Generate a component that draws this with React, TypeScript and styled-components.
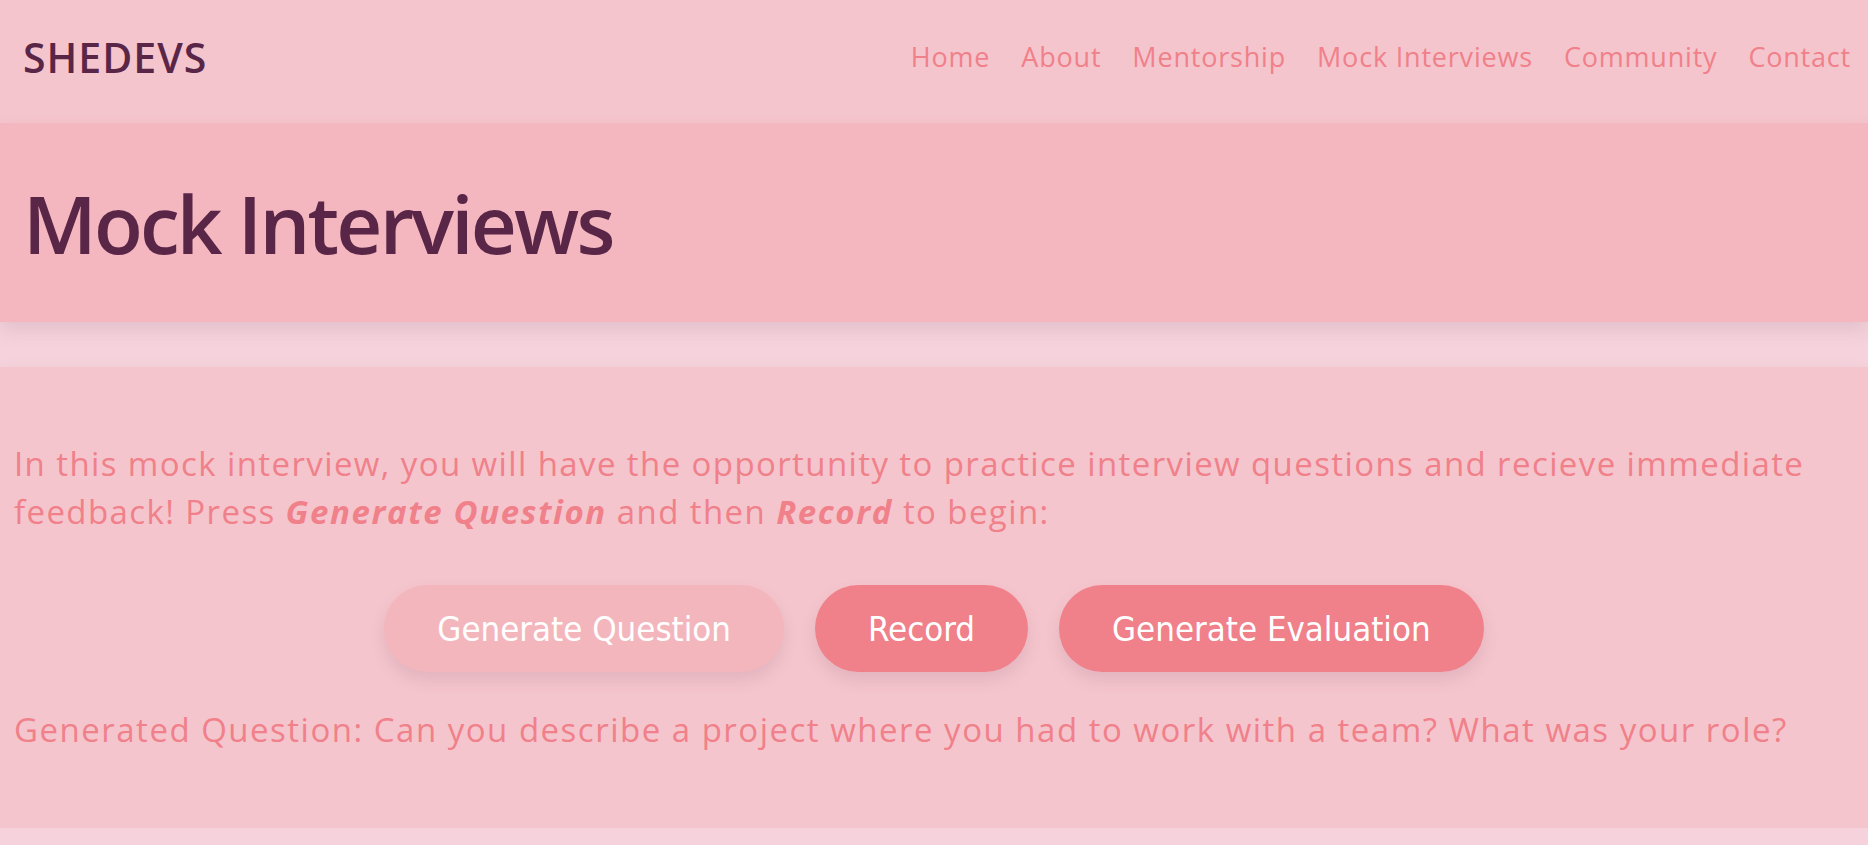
import styled, { createGlobalStyle } from 'styled-components'

const GlobalStyle = createGlobalStyle`
	* {
		box-sizing: border-box;
	}
	body {
		margin: 0;
		background: #f6d3dc;
		font-family: 'Open Sans', 'Noto Sans', sans-serif;
	}
`

const pink = '#f08089'
const plum = '#5a2648'

const Nav = styled.nav`
	display: flex;
	justify-content: space-between;
	align-items: center;
	height: 123px;
	padding: 0 17px 10px 23px;
	background: #f5c5cd;
`

const Logo = styled.div`
	font-size: 41px;
	font-weight: 600;
	letter-spacing: 1px;
	color: ${plum};
`

const Links = styled.ul`
	display: flex;
	gap: 31px;
	margin: 0;
	padding: 0;
	list-style: none;
	li {
		font-size: 27px;
		letter-spacing: 0.8px;
		color: ${pink};
	}
`

const Banner = styled.header`
	display: flex;
	align-items: center;
	height: 199px;
	padding-left: 23px;
	margin-bottom: 45px;
	background: #f4b7bf;
	box-shadow: 0 8px 18px rgba(90, 60, 80, 0.12);
	position: relative;
	h1 {
		margin: 0;
		font-size: 80px;
		font-weight: 600;
		letter-spacing: -2.8px;
		color: ${plum};
	}
`

const Card = styled.section`
	padding: 73px 14px 74px;
	background: #f5c5cd;
	box-shadow: 0 8px 18px rgba(90, 60, 80, 0.12);
`

const Text = styled.p<{ $spacing?: number }>`
	margin: 0;
	font-size: 33px;
	line-height: 48px;
	letter-spacing: ${(p) => p.$spacing ?? 1.4}px;
	color: ${pink};
	em {
		font-weight: 700;
		font-style: italic;
		letter-spacing: 1.6px;
	}
`

const Actions = styled.div`
	display: flex;
	justify-content: center;
	gap: 31px;
	margin: 49px 0 34px;
`

const Button = styled.button<{ $light?: boolean }>`
	height: 87px;
	padding: 0 53px;
	border: none;
	border-radius: 44px;
	background: ${(p) => (p.$light ? '#f4b6bd' : pink)};
	color: #fff;
	font-family: 'DejaVu Sans Condensed', 'DejaVu Sans', sans-serif;
	font-size: 34.5px;
	box-shadow: 0 8px 16px rgba(90, 60, 80, 0.12);
	cursor: pointer;
`

export default function App() {
	const links = ['Home', 'About', 'Mentorship', 'Mock Interviews', 'Community', 'Contact']
	return (
		<>
			<GlobalStyle />
			<Nav>
				<Logo>SHEDEVS</Logo>
				<Links>
					{links.map((l) => (
						<li key={l}>{l}</li>
					))}
				</Links>
			</Nav>
			<Banner>
				<h1>Mock Interviews</h1>
			</Banner>
			<Card>
				<Text>
					In this mock interview, you will have the opportunity to practice interview questions and
					recieve immediate feedback! Press <em>Generate Question</em> and then <em>Record</em> to
					begin:
				</Text>
				<Actions>
					<Button $light>Generate Question</Button>
					<Button>Record</Button>
					<Button>Generate Evaluation</Button>
				</Actions>
				<Text $spacing={1.5}>
					Generated Question: Can you describe a project where you had to work with a team? What was
					your role?
				</Text>
			</Card>
		</>
	)
}
